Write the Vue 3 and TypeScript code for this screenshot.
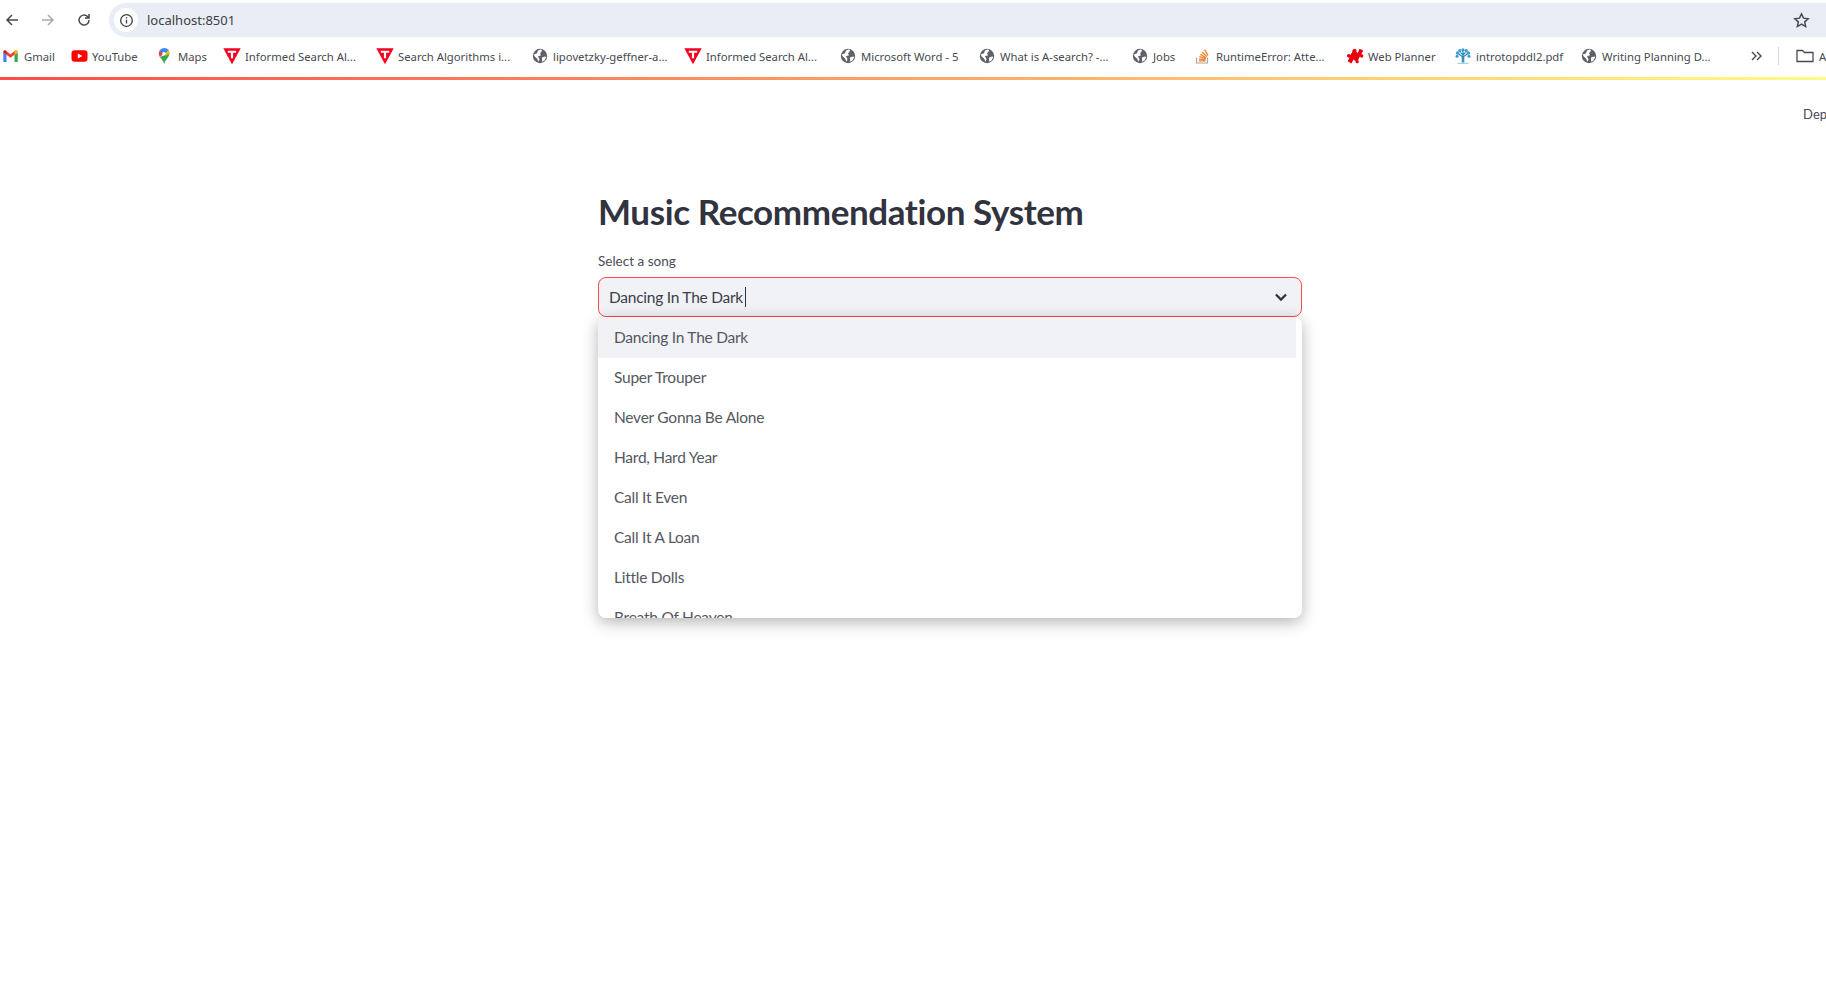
<script setup lang="ts">
type IconName = 'gmail' | 'youtube' | 'maps' | 'tee' | 'globe' | 'stack' | 'puzzle' | 'tree'

const bookmarks: { icon: IconName; label: string; width: number }[] = [
  { icon: 'gmail', label: 'Gmail', width: 68 },
  { icon: 'youtube', label: 'YouTube', width: 86 },
  { icon: 'maps', label: 'Maps', width: 67 },
  { icon: 'tee', label: 'Informed Search Al...', width: 153 },
  { icon: 'tee', label: 'Search Algorithms i...', width: 155 },
  { icon: 'globe', label: 'lipovetzky-geffner-a...', width: 153 },
  { icon: 'tee', label: 'Informed Search Al...', width: 155 },
  { icon: 'globe', label: 'Microsoft Word - 5', width: 139 },
  { icon: 'globe', label: 'What is A-search? -...', width: 153 },
  { icon: 'globe', label: 'Jobs', width: 63 },
  { icon: 'stack', label: 'RuntimeError: Atte...', width: 152 },
  { icon: 'puzzle', label: 'Web Planner', width: 108 },
  { icon: 'tree', label: 'introtopddl2.pdf', width: 126 },
  { icon: 'globe', label: 'Writing Planning D...', width: 169 },
]

const songs = [
  'Dancing In The Dark',
  'Super Trouper',
  'Never Gonna Be Alone',
  'Hard, Hard Year',
  'Call It Even',
  'Call It A Loan',
  'Little Dolls',
  'Breath Of Heaven',
]
</script>

<template>
  <div class="page">
    <div class="browser">
      <div class="toolbar">
        <svg class="nav" viewBox="0 0 16 16"><path d="M14 8H3M8 3 3 8l5 5" /></svg>
        <svg class="nav dim" viewBox="0 0 16 16"><path d="M2 8h11M8 3l5 5-5 5" /></svg>
        <svg class="nav" viewBox="0 0 16 16"><path d="M13 8a5 5 0 1 1-1.500-3.500L13 6M13 2v4H9" /></svg>
        <div class="omnibox">
          <span class="site-info">
            <svg viewBox="0 0 16 16"><circle cx="8" cy="8" r="6.200" /><path d="M8 7.200v4M8 4.400v1.400" /></svg>
          </span>
          <span class="url">localhost:8501</span>
          <svg class="star" viewBox="0 0 16 16"><path d="m8 1.800 1.900 4 4.400.5-3.300 3 .9 4.400L8 11.500l-3.900 2.200.9-4.400-3.300-3 4.400-.5z" /></svg>
        </div>
      </div>

      <div class="bookmarks">
        <div v-for="(b, i) in bookmarks" :key="i" class="bookmark" :style="{ width: b.width + 'px' }">
          <svg class="fav" viewBox="0 0 16 16">
            <template v-if="b.icon === 'gmail'">
              <path d="M.3 14V4.500l3.200 2.300V14z" fill="#4285f4" />
              <path d="M14.700 14V4.500l-3.200 2.300V14z" fill="#34a853" />
              <path d="M.3 4.500C.3 2.500 2 2 3.300 3L7.500 6.200 11.700 3C13 2 14.700 2.500 14.700 4.500L11.500 6.800 7.500 9.800 3.500 6.800z" fill="#ea4335" />
              <path d="M11.700 3c1.300-1 3-.5 3 1.500l-3.200 2.300z" fill="#fbbc04" />
              <path d="M3.300 3C2 2 .3 2.500.3 4.500l3.200 2.300z" fill="#c5221f" />
            </template>
            <template v-else-if="b.icon === 'youtube'">
              <rect x="0.500" y="2.200" width="16" height="11.600" rx="3" fill="#f00" />
              <path d="m6.800 5.500 4.600 2.500-4.600 2.500z" fill="#fff" />
            </template>
            <template v-else-if="b.icon === 'maps'">
              <path d="M6.800 0C4.800.3 3 1.500 2.200 3.300L7 7.500l4.500-5.400C10.500.7 8.800-.2 6.800 0z" fill="#4285f4" />
              <path d="M2.200 3.300C1.400 5.200 1.700 7.200 2.800 9L7 5.500z" fill="#ea4335" />
              <path d="M11.500 2.100 7 7.500 2.800 9c1.800 2.300 3.700 3.800 4.400 7 .7-3 2.300-4.500 3.700-6.500 1.800-2.300 2.100-5 .6-7.400z" fill="#34a853" />
              <path d="M11.500 2.100 8.400 5.800c.5.900.3 1.700-.3 2.300L12 5.900c.3-1.300 0-2.700-.5-3.800z" fill="#fbbc04" />
              <circle cx="7" cy="5.700" r="1.800" fill="#fff" />
            </template>
            <template v-else-if="b.icon === 'tee'">
              <path d="M-.7 .2h17.400L8 16.300z" fill="#f5001e" />
              <path d="M3.800 2.800h8.400v2H9.100v5.400H6.900V4.800H3.800z" fill="#fff" />
            </template>
            <template v-else-if="b.icon === 'globe'">
              <circle cx="8" cy="8" r="7.200" fill="#5f6368" />
              <path d="M1.800 6.500 5 5.200l1-2.700 3.200-1.300.8 1.800L8 5.200l1 2-3 1 1.500 3-1 2.600L5 10.500 2.500 8.300zM10 9.500l3-1 1.300.6-1.800 3.400-2.300 1.200z" fill="#fff" />
            </template>
            <template v-else-if="b.icon === 'stack'">
              <path d="M1.500 9.500v5.500h11V9.500" fill="none" stroke="#a8a6a4" stroke-width="1.200" />
              <path d="M3.800 12.800h6.700M3.900 10.900l6.700.9M4.400 8.700l6.400 2M5.400 6.400l5.800 3.400M7 4l5 4.500M9.500 1.500l3.500 5.800" fill="none" stroke="#f48024" stroke-width="1.300" />
            </template>
            <template v-else-if="b.icon === 'puzzle'">
              <path d="M6.500 1.200c1.800-1.600 4 .5 2.700 2.500l1.600 1.200L12.500.7l3.700 1.800-1.900 3.800c1.800-.6 2.700 1.700 1.500 2.900-1 1-2.300.4-2.900-.7L11 12.300c1.300.5 1.200 2.700-.4 3-1.500.3-2.400-1-2-2.300l-2.300-1.200-1.800 3.700-3.900-2.200 2-3.800C.7 10.200-.7 8.400.3 6.800c.9-1.300 2.500-.9 3.200.3l1.900-3.300c-.4-1 .1-1.900 1.100-2.600z" fill="#e8000f" />
            </template>
            <template v-else>
              <path d="M7.300 14.500V8.500L3.500 6M8.700 14.500V8.500L12.500 6M8 10V3M5.500 4.500 8 7l2.500-2.500" fill="none" stroke="#2a86b8" stroke-width="1.200" />
              <g fill="#3b9bd0">
                <circle cx="2.700" cy="5" r="1.800" /><circle cx="13.300" cy="5" r="1.800" /><circle cx="4.800" cy="2.600" r="1.600" />
                <circle cx="11.200" cy="2.600" r="1.600" /><circle cx="8" cy="1.800" r="1.600" /><circle cx="2" cy="8.300" r="1.500" /><circle cx="14" cy="8.300" r="1.500" />
              </g>
              <path d="M2.500 15.300h11" stroke="#8fc3e0" stroke-width="1" />
            </template>
          </svg>
          <span class="bookmark-label">{{ b.label }}</span>
        </div>
        <svg class="more" viewBox="0 0 12 12"><path d="m2 2 4 4-4 4M7 2l4 4-4 4" /></svg>
        <span class="divider"></span>
        <div class="all-bookmarks">
          <svg class="folder" viewBox="0 0 18 16"><path d="M1 13.500V2.500h5.500l2 2h8.500v9z" /></svg>
          <span class="bookmark-label">All Bookmarks</span>
        </div>
      </div>
    </div>

    <div class="decoration"></div>

    <div class="app-header">
      <span class="deploy">Deploy</span>
    </div>

    <main class="main">
      <h1 class="title">Music Recommendation System</h1>
      <label class="field-label">Select a song</label>
      <div class="select-wrap">
        <div class="select">
          <span class="value">Dancing In The Dark</span><span class="caret"></span>
          <svg class="chevron" viewBox="0 0 16 16"><path d="m3.500 5.800 4.500 4.500 4.500-4.500" /></svg>
        </div>
        <ul class="menu">
          <li v-for="(song, i) in songs" :key="song" class="option" :class="{ active: i === 0 }">{{ song }}</li>
        </ul>
      </div>
    </main>
  </div>
</template>

<style scoped>
.page {
  height: 986px;
  overflow: hidden;
  background: #fff;
  font-family: "Noto Sans", sans-serif;
}

.browser {
  height: 77px;
  display: flex;
  flex-direction: column;
}

.toolbar {
  height: 38px;
  padding: 2px 0 0 4px;
  box-sizing: border-box;
  display: flex;
  align-items: center;
  flex: none;
}

.nav {
  width: 16px;
  height: 16px;
  margin-right: 20px;
  fill: none;
  stroke: #474a4f;
  stroke-width: 1.500;
  flex: none;
}

.nav.dim {
  stroke: #a9abae;
}

.nav:nth-child(3) {
  margin-right: 17px;
}

.omnibox {
  flex: 1;
  height: 34px;
  border-radius: 17px 0 0 17px;
  background: #e9edf6;
  display: flex;
  align-items: center;
  padding: 0 5px;
  color: #474a4f;
  font-size: 13px;
}

.site-info {
  width: 24px;
  height: 24px;
  border-radius: 50%;
  background: #fff;
  display: flex;
  align-items: center;
  justify-content: center;
  margin-right: 9px;
}

.site-info svg {
  width: 15px;
  height: 15px;
  fill: none;
  stroke: #3c4043;
  stroke-width: 1.400;
}

.url {
  flex: 1;
  color: #3c4043;
}

.star {
  width: 17px;
  height: 17px;
  fill: none;
  stroke: #474a4f;
  stroke-width: 1.400;
  margin-right: 11px;
}

.bookmarks {
  height: 36px;
  padding-left: 3px;
  display: flex;
  align-items: center;
  white-space: nowrap;
}

.bookmark {
  display: flex;
  align-items: center;
  gap: 5px;
  flex: none;
}

.fav {
  width: 16px;
  height: 16px;
  flex: none;
  overflow: visible;
}

.bookmark-label {
  font-size: 11.300px;
  color: #474a4f;
}

.more {
  width: 12px;
  height: 12px;
  flex: none;
  fill: none;
  stroke: #474a4f;
  stroke-width: 1.400;
}

.divider {
  width: 1px;
  height: 18px;
  background: #cfd9e8;
  margin: 0 17px 0 16px;
  flex: none;
}

.all-bookmarks {
  display: flex;
  align-items: center;
  gap: 5px;
  flex: none;
}

.folder {
  width: 18px;
  height: 16px;
  fill: none;
  stroke: #474a4f;
  stroke-width: 1.300;
}

.decoration {
  height: 3px;
  background: linear-gradient(90deg, #ff4b4b, #fffd80);
}

.app-header {
  height: 50px;
  padding-top: 26px;
  box-sizing: border-box;
  display: flex;
  justify-content: flex-end;
  overflow: hidden;
}

.deploy {
  margin-right: -18px;
  font-size: 13px;
  color: #4a4c57;
  font-family: Lato, sans-serif;
}

.main {
  width: 704px;
  margin-left: 598px;
  padding-top: 59px;
  color: #31333f;
  font-family: Lato, "Noto Sans", sans-serif;
}

.title {
  margin: 0;
  font-size: 35px;
  line-height: 44px;
  font-weight: 700;
  letter-spacing: -0.4px;
}

.field-label {
  display: block;
  margin-top: 18px;
  font-size: 13.500px;
  line-height: 20px;
  color: #4a4c57;
}

.select-wrap {
  position: relative;
  margin-top: 6px;
}

.select {
  height: 40px;
  box-sizing: border-box;
  border: 1px solid #ff4b4b;
  border-radius: 8px;
  background: #f0f2f6;
  display: flex;
  align-items: center;
  padding: 0 10px 0 10px;
  font-size: 15.500px;
  letter-spacing: -0.25px;
  color: #3c3e4a;
}

.caret {
  width: 1px;
  height: 20px;
  margin-left: 2px;
  background: #31333f;
}

.chevron {
  width: 18px;
  height: 18px;
  margin-left: auto;
  margin-right: 1px;
  fill: none;
  stroke: #31333f;
  stroke-width: 2;
}

.menu {
  position: absolute;
  top: 40px;
  left: 0;
  right: 0;
  height: 301px;
  margin: 0;
  padding: 0;
  list-style: none;
  overflow: hidden;
  background: #fff;
  border-radius: 8px;
  box-shadow: 0 4px 16px rgba(0, 0, 0, 0.3);
}

.option {
  height: 40px;
  box-sizing: border-box;
  margin-right: 6px;
  padding-left: 16px;
  display: flex;
  align-items: center;
  font-size: 15.500px;
  letter-spacing: -0.25px;
  color: #55575f;
}

.option.active {
  height: 41px;
  margin-bottom: -1px;
  padding-bottom: 2px;
  background: #f0f2f6;
}
</style>

<style>
html, body {
  margin: 0;
  background: #fff;
}
</style>
